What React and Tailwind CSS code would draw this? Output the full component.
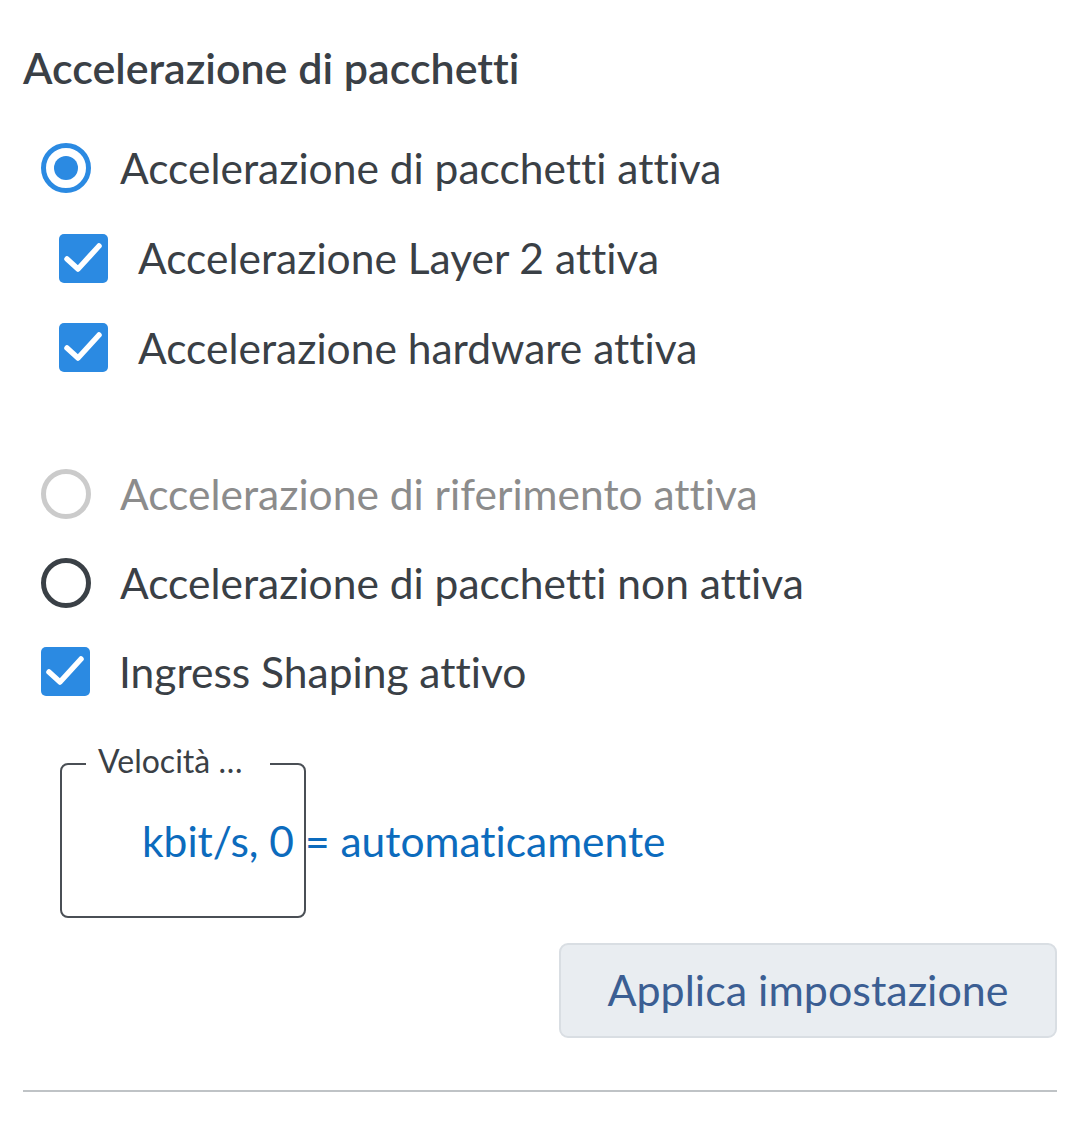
import React from "react";

const font = { fontFamily: "Lato, 'Noto Sans', sans-serif" };

function Check({ className = "" }) {
  return (
    <div className={"w-[49px] h-[49px] rounded-[5px] bg-[#2b8ae2] flex items-center justify-center shrink-0 " + className}>
      <svg width="49" height="49" viewBox="0 0 49 49">
        <polyline points="8,25 19,35 40,12" fill="none" stroke="white" strokeWidth="5.5" strokeLinecap="round" strokeLinejoin="round" />
      </svg>
    </div>
  );
}

function RadioOn() {
  return (
    <div className="w-[50px] h-[50px] rounded-full border-[5px] border-[#2b8ae2] flex items-center justify-center shrink-0">
      <div className="w-[24px] h-[24px] rounded-full bg-[#2b8ae2]" />
    </div>
  );
}

function RadioOff({ color }) {
  return <div className={"w-[50px] h-[50px] rounded-full border-[5px] shrink-0 " + color} />;
}

export default function App() {
  return (
    <div className="w-[1080px] h-[1137px] bg-white px-[23px] text-[#3a4046] [font-variant-ligatures:none]" style={font}>
      <div className="pt-[44px] h-[92px] leading-[48px] text-[43px] font-semibold text-[#3a4046]">
        Accelerazione di pacchetti
      </div>

      <div className="mt-[31px] ml-[18px]">
        <div className="h-[90px] flex items-center">
          <RadioOn />
          <span className="ml-[29px] text-[42.5px]">Accelerazione di pacchetti attiva</span>
        </div>
        <div className="h-[90px] flex items-center pl-[18px]">
          <Check />
          <span className="ml-[30px] text-[42.5px]">Accelerazione Layer 2 attiva</span>
        </div>
        <div className="h-[89px] flex items-center pl-[18px]">
          <Check />
          <span className="ml-[30px] text-[42.5px]">Accelerazione hardware attiva</span>
        </div>

        <div className="mt-[57px] h-[89px] flex items-center">
          <RadioOff color="border-[#cbcbcb]" />
          <span className="ml-[29px] text-[42.5px] text-[#8c8c8c]">Accelerazione di riferimento attiva</span>
        </div>
        <div className="h-[89px] flex items-center">
          <RadioOff color="border-[#3a4046]" />
          <span className="ml-[29px] text-[42.5px]">Accelerazione di pacchetti non attiva</span>
        </div>
        <div className="h-[89px] flex items-center">
          <Check />
          <span className="ml-[29px] text-[42.5px]">Ingress Shaping attivo</span>
        </div>

        <div className="mt-[47px] ml-[19px] relative w-[246px] h-[155px] rounded-[8px] border-[2px] border-[#4a4f55]">
          <span className="absolute left-[24px] top-[-24px] bg-white pl-[12px] pr-[28px] text-[32px] leading-[40px] text-[#3a4046] whitespace-nowrap">
            Velocità …
          </span>
          <div className="absolute left-[80px] top-[52px] text-[42.5px] leading-[48px] text-[#0c6bbd] whitespace-nowrap">
            kbit/s, 0 = automaticamente
          </div>
        </div>
      </div>

      <div className="mt-[25px] flex justify-end">
        <button className="w-[498px] h-[95px] rounded-[9px] bg-[#e9edf1] border-[2px] border-[#d9dee3] text-[43px] text-[#3b5e93]" style={font}>
          Applica impostazione
        </button>
      </div>

      <div className="mt-[52px] h-[2px] bg-[#bfc3c6]" />
    </div>
  );
}
